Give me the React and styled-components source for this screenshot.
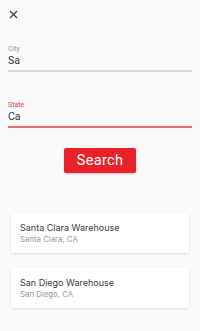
import React from 'react';
import styled, { createGlobalStyle } from 'styled-components';

const GlobalStyle = createGlobalStyle`
    html, body {
        margin: 0;
        background: #fafafa;
        font-family: Roboto, "Liberation Sans", sans-serif;
    }
`

const Page = styled.div`
    width: 200px;
    height: 331px;
    background: #fafafa;
    padding: 9px 8px 0;
    box-sizing: border-box;
    display: flex;
    flex-direction: column;
`

const CloseBtn = styled.button`
    width: 10px;
    height: 10px;
    padding: 0;
    border: none;
    background: none;
    display: flex;
    align-items: center;
    justify-content: center;
    color: #444;
`

const Field = styled.div`
    display: flex;
    flex-direction: column;
    margin-top: ${props => props.top}px;
    border-bottom: ${props => props.active ? '2px solid #e86a6e' : '2px solid #dadada'};
    padding-bottom: 3px;
`

const Label = styled.span`
    font-size: 7px;
    line-height: 8px;
    color: ${props => props.active ? '#e8404a' : '#9a9a9a'};
`

const Value = styled.span`
    font-size: 10.5px;
    line-height: 12px;
    margin-top: 2px;
    color: #333;
`

const SearchButton = styled.button`
    align-self: center;
    margin-top: 20px;
    width: 72px;
    height: 25px;
    border: none;
    border-radius: 2px;
    background: #e8222a;
    color: #fff;
    font-family: Roboto, "Liberation Sans", sans-serif;
    font-size: 14.5px;
    letter-spacing: 0.3px;
    box-shadow: 0 1px 2px rgba(0, 0, 0, 0.25);
    padding: 0;
`

const List = styled.div`
    display: flex;
    flex-direction: column;
    gap: 15px;
    margin: 40px 3px 0;
`

const Card = styled.div`
    background: #fff;
    border-radius: 3px;
    height: 40px;
    box-sizing: border-box;
    padding: 0 9px;
    display: flex;
    flex-direction: column;
    justify-content: center;
    box-shadow: 0 1px 3px rgba(0, 0, 0, 0.12);
    font-family: Inter, "Liberation Sans", sans-serif;
`

const CardTitle = styled.span`
    font-size: 9px;
    line-height: 12px;
    color: #3a3a3a;
`

const CardSub = styled.span`
    font-size: 7.8px;
    line-height: 11px;
    color: #9a9a9a;
`

const warehouses = [
    { name: 'Santa Clara Warehouse', place: 'Santa Clara, CA' },
    { name: 'San Diego Warehouse', place: 'San Diego, CA' },
]

export default function App() {
    return (
        <>
            <GlobalStyle />
            <Page>
                <CloseBtn>
                    <svg width="9" height="9" viewBox="0 0 9 9">
                        <path d="M1 1 L8 8 M8 1 L1 8" stroke="currentColor" strokeWidth="1.4" />
                    </svg>
                </CloseBtn>
                <Field top={26}>
                    <Label>City</Label>
                    <Value>Sa</Value>
                </Field>
                <Field top={29} active>
                    <Label active>State</Label>
                    <Value>Ca</Value>
                </Field>
                <SearchButton>Search</SearchButton>
                <List>
                    {warehouses.map(w => (
                        <Card key={w.name}>
                            <CardTitle>{w.name}</CardTitle>
                            <CardSub>{w.place}</CardSub>
                        </Card>
                    ))}
                </List>
            </Page>
        </>
    )
}
